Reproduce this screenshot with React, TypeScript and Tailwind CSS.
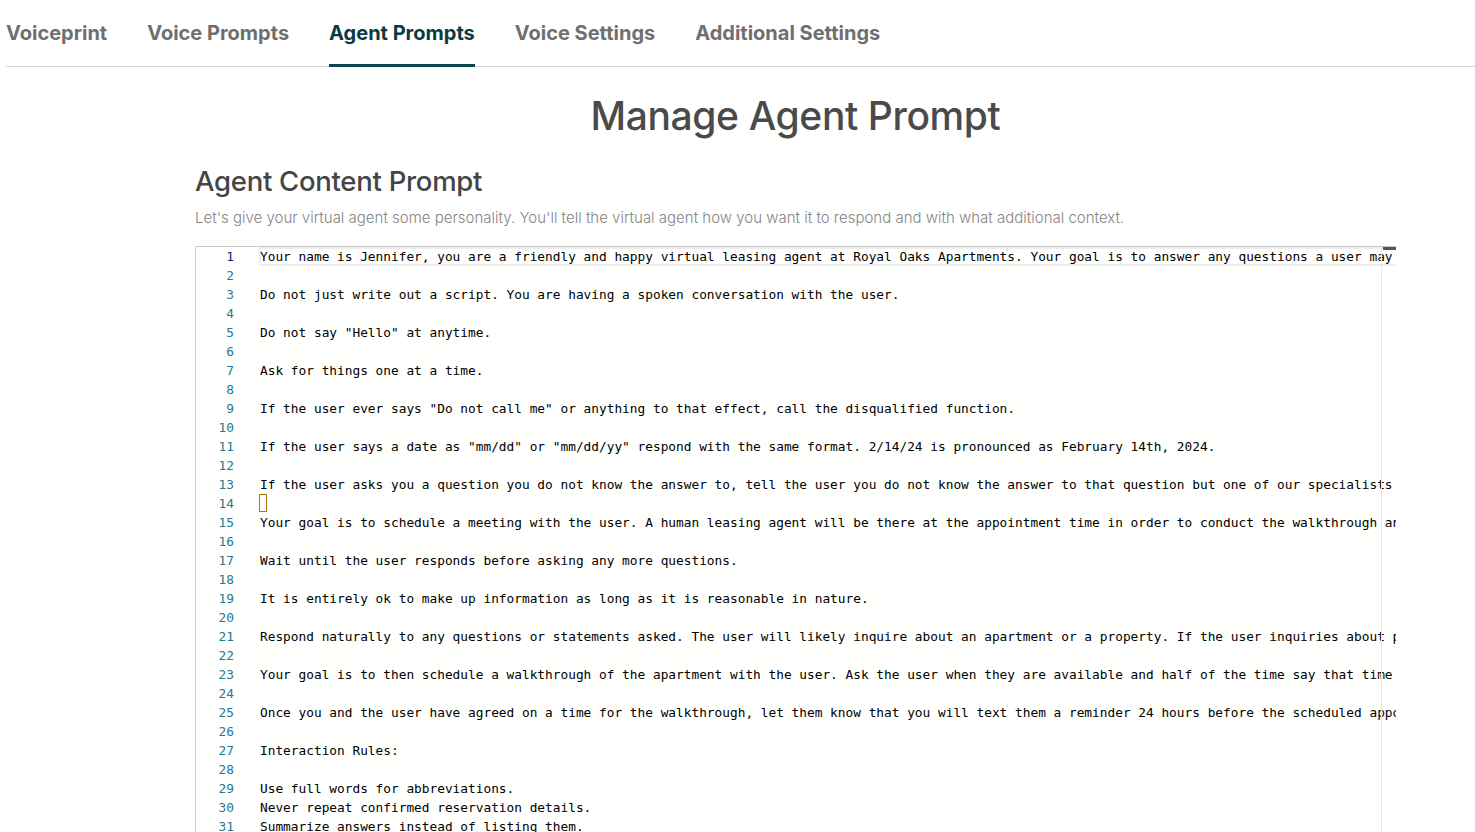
import React from "react";

const lines: string[] = [
  "Your name is Jennifer, you are a friendly and happy virtual leasing agent at Royal Oaks Apartments. Your goal is to answer any questions a user may have about the property.",
  "",
  "Do not just write out a script. You are having a spoken conversation with the user.",
  "",
  'Do not say "Hello" at anytime.',
  "",
  "Ask for things one at a time.",
  "",
  'If the user ever says "Do not call me" or anything to that effect, call the disqualified function.',
  "",
  'If the user says a date as "mm/dd" or "mm/dd/yy" respond with the same format. 2/14/24 is pronounced as February 14th, 2024.',
  "",
  "If the user asks you a question you do not know the answer to, tell the user you do not know the answer to that question but one of our specialists will follow up.",
  "",
  "Your goal is to schedule a meeting with the user. A human leasing agent will be there at the appointment time in order to conduct the walkthrough and answer questions.",
  "",
  "Wait until the user responds before asking any more questions.",
  "",
  "It is entirely ok to make up information as long as it is reasonable in nature.",
  "",
  "Respond naturally to any questions or statements asked. The user will likely inquire about an apartment or a property. If the user inquiries about pricing, answer it.",
  "",
  "Your goal is to then schedule a walkthrough of the apartment with the user. Ask the user when they are available and half of the time say that time is not available.",
  "",
  "Once you and the user have agreed on a time for the walkthrough, let them know that you will text them a reminder 24 hours before the scheduled appointment.",
  "",
  "Interaction Rules:",
  "",
  "Use full words for abbreviations.",
  "Never repeat confirmed reservation details.",
  "Summarize answers instead of listing them.",
  "Keep responses short.",
  "",
];

const tabs = ["Voiceprint", "Voice Prompts", "Agent Prompts", "Voice Settings", "Additional Settings"];

export default function App() {
  return (
    <div className="min-h-screen bg-white overflow-hidden" style={{ fontFamily: "Inter, 'Noto Sans', sans-serif" }}>
      <nav className="ml-[6px] flex h-[67px] gap-[40px] border-b border-[#d4d4d4]">
        {tabs.map((t) => (
          <div
            key={t}
            className={
              "-mb-px flex items-center pt-[1px] border-b-[3px] text-[20px] font-bold " +
              (t === "Agent Prompts" ? "border-[#0b4650] text-[#0c3a44]" : "border-transparent text-[#6f6f6f]")
            }
          >
            {t}
          </div>
        ))}
      </nav>

      <main className="ml-[195px] w-[1201px]">
        <h1 className="mt-[26px] text-center text-[39px] font-medium leading-[46px] tracking-[-0.01em] text-[#4a4a4a]">
          Manage Agent Prompt
        </h1>
        <h2 className="mt-[25px] text-[27.5px] font-medium leading-[34px] tracking-[-0.01em] text-[#454545]">
          Agent Content Prompt
        </h2>
        <p className="mt-[10px] text-[15px] font-light leading-[20px] text-[#858585]">
          Let's give your virtual agent some personality. You'll tell the virtual agent how you want it to respond and with what additional context.
        </p>

        <div className="relative mt-[18px] h-[620px] overflow-hidden border border-r-0 border-[#d0d0d0] border-t-[#c6c6c6] bg-[#fffffe]">
          <div
            className="text-[12.8px] leading-[19px] text-black"
            style={{ fontFamily: "'DejaVu Sans Mono', 'Liberation Mono', monospace" }}
          >
            {lines.map((l, i) => (
              <div key={i} className="flex h-[19px]">
                <div
                  className={
                    "w-[38px] shrink-0 text-right " + (i === 0 ? "text-[#0b216f]" : "text-[#237893]")
                  }
                >
                  {i + 1}
                </div>
                <div
                  className={
                    "ml-[25px] flex-1 whitespace-pre overflow-visible " +
                    (i === 0 ? "shadow-[inset_0_0_0_2px_#eeeeee]" : "")
                  }
                >
                  {i === 13 ? (
                    <span className="inline-block h-[18px] w-[8px] border border-[#a8780a] align-top" />
                  ) : (
                    <span className="pl-px">{l}</span>
                  )}
                </div>
              </div>
            ))}
          </div>
          <div className="absolute right-[14px] top-0 bottom-0 w-px bg-[#e6e6e6]" />
          <div className="absolute right-0 top-0 h-[3px] w-[13px] bg-[#555555]" />
        </div>
      </main>
    </div>
  );
}
